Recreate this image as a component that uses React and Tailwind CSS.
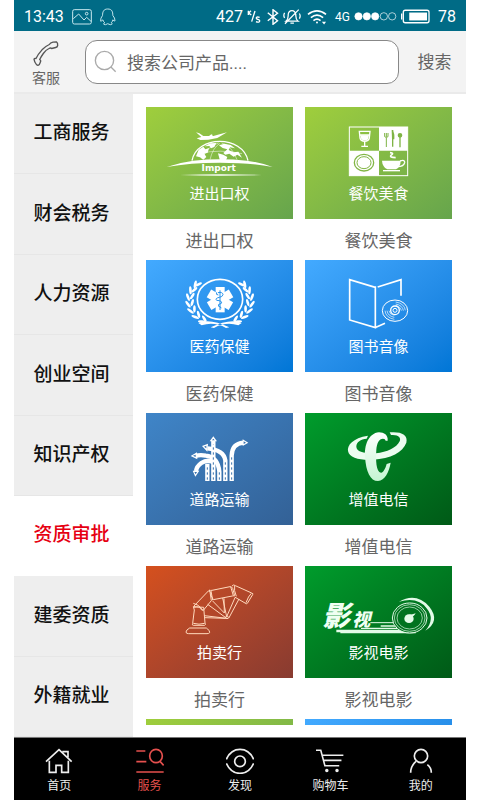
import { useState } from 'react';

const categories = ['工商服务', '财会税务', '人力资源', '创业空间', '知识产权', '资质审批', '建委资质', '外籍就业'];

const leafAngles = [34, 50, 66, 82, 98, 114, 130];

function ImportArt() {
    return (
        <svg viewBox="18 20 441 228" className="w-full" fill="#fff" aria-hidden="true">
            <path d="M168 96 L178 99 L190 107 L220 107 L261 96 L232 113 L205 118 L181 119 L170 114 L184 110Z" />
            <path d="M204 109 L214 102 L218 104 L216 110Z" />
            <path d="M156 181 C170 104 308 104 324 181" fill="none" stroke="#fff" strokeWidth="4" />
            <path d="M168 168 L176 148 L190 139 L196 147 L207 143 L203 157 L193 160 L199 170 L190 178 L180 171Z" />
            <path d="M194 138 L211 129 L229 128 L223 140 L213 144 L208 137Z" />
            <path d="M237 135 L253 130 L272 134 L285 144 L270 141 L266 149 L280 156 L295 154 L306 172 L292 163 L281 169 L268 160 L256 163 L250 158 L262 147 L248 143Z" />
            <path d="M234 159 L250 163 L262 170 L257 182 L240 181Z" />
            <path d="M186 176 Q204 135 236 128 M210 178 Q218 142 240 129 M291 178 Q277 138 245 128 M176 160 Q240 145 306 160" fill="none" stroke="#fff" strokeWidth="1.5" />
            <path d="M80 200 Q120 186 160 181 Q240 173 320 181 Q360 186 398 200 Q330 187 240 187 Q150 187 80 200Z" />
            <text x="236" y="211" textAnchor="middle" fontFamily="DejaVu Sans, sans-serif" fontSize="27" fontWeight="700">Import</text>
            <path d="M120 224 Q240 220 365 224 Q240 228 120 224Z" />
        </svg>
    );
}

function FoodArt() {
    return (
        <svg viewBox="18 20 441 228" className="w-full" fill="none" stroke="#fff" aria-hidden="true">
            <rect x="151" y="80" width="175" height="146" strokeWidth="3" />
            <path d="M240 80h86v71h-86zM151 151h89v75h-89z" fill="#fff" stroke="none" />
            <path d="M181 93h32l-2 20c-3 13-25 13-28 0zM183 104h28M197 124v13M187 138h20" strokeWidth="4" />
            <path d="M184 105h26l-3 12q-10 7-20 0z" fill="#fff" stroke="none" />
            <g stroke="#7fb445" strokeWidth="4">
                <path d="M257 98v11q5 5 10 0v-11M262 98v12M262 112v28" strokeWidth="3" />
                <path d="M281 89v50" />
                <path d="M278 88q10 8 8 29h-7z" fill="#7fb445" stroke="none" />
                <circle cx="303" cy="105" r="5" fill="#7fb445" />
                <path d="M303 108v33" />
            </g>
            <g stroke="#82b645">
                <ellipse cx="195" cy="187" rx="29" ry="25" strokeWidth="4" />
                <ellipse cx="195" cy="187" rx="21" ry="18" strokeWidth="3" />
            </g>
            <path d="M249 181h56q0 18-14 26h-26q-15-8-16-26z" fill="#fff" stroke="none" />
            <path d="M303 182q15-5 14 5q-3 12-21 12" strokeWidth="4" />
            <path d="M252 211h51" strokeWidth="4" />
            <path d="M273 157q14 1 3 8q-5 7 14 7" strokeWidth="5" />
        </svg>
    );
}

function MedicalArt() {
    return (
        <svg viewBox="18 14 441 228" className="w-full" fill="#fff" aria-hidden="true">
            <ellipse cx="240" cy="132" rx="68" ry="60" fill="none" stroke="#fff" strokeWidth="5" />
            {[0, 60, 120].map((deg) => (
                <rect key={deg} x="227" y="95" width="27" height="76" transform={`rotate(${deg} 240 133)`} />
            ))}
            <path d="M240 105v59" stroke="#2391ec" strokeWidth="3" />
            <path d="M234 112q14-3 15 6q-2 7-11 8q-14 3-8 9q18 1 14 9q-13 3-8 9q8 1 7 6M230 111q-3 8 5 8" fill="none" stroke="#2391ec" strokeWidth="3" />
            {leafAngles.map((a) => {
                const r = (a * Math.PI) / 180;
                const dx = Math.sin(r);
                const dy = Math.cos(r);
                return (
                    <g key={a}>
                        <ellipse cx={240 - 97 * dx} cy={136 + 76 * dy} rx="4" ry="12" transform={`rotate(${a - 118} ${240 - 97 * dx} ${136 + 76 * dy})`} />
                        <ellipse cx={240 + 97 * dx} cy={136 + 76 * dy} rx="4" ry="12" transform={`rotate(${118 - a} ${240 + 97 * dx} ${136 + 76 * dy})`} />
                        <ellipse cx={240 - 84 * dx} cy={132 + 70 * dy} rx="4" ry="11" transform={`rotate(${a - 66} ${240 - 84 * dx} ${132 + 70 * dy})`} />
                        <ellipse cx={240 + 84 * dx} cy={132 + 70 * dy} rx="4" ry="11" transform={`rotate(${66 - a} ${240 + 84 * dx} ${132 + 70 * dy})`} />
                    </g>
                );
            })}
            <path d="M175 203 Q210 188 268 216 L258 218 Q222 198 185 210ZM305 203 Q270 188 212 216 L222 218 Q258 198 295 210Z" />
        </svg>
    );
}

function BookArt() {
    return (
        <svg viewBox="18 14 441 228" className="w-full" fill="none" stroke="#fff" aria-hidden="true">
            <path d="M229 96 L152 73 V194 L229 217 V93M236 95 L306 73 V121M231 216 L258 204" strokeWidth="5" />
            <ellipse cx="288" cy="166" rx="38" ry="32" strokeWidth="3" />
            <circle cx="288" cy="165" r="13" strokeWidth="4" />
            <circle cx="288" cy="165" r="6" strokeWidth="3" />
            <path d="M258 166q2 21 28 26M264 166q2 16 22 20M270 166q2 12 16 14M290 140q26 4 29 25M290 146q21 4 23 20M290 151q15 3 17 15" strokeWidth="2" />
        </svg>
    );
}

function RoadArt() {
    const roads = [
        'M202 218V166',
        'M220 218V98',
        'M238 218V190Q234 146 197 142Q181 138 166 143',
        'M224 164Q204 150 184 164Q170 174 168 188',
        'M256 218V156Q251 124 202 120',
        'M275 218V142Q276 106 310 103',
    ];
    return (
        <svg viewBox="18 14 441 228" className="w-full" fill="none" aria-hidden="true">
            {roads.map((d) => <path key={d} d={d} stroke="#fff" strokeWidth="13" />)}
            {/* lane markings, only on the straight parts */}
            <path d="M202 214V170M220 214V108M238 214V190M256 214V154M275 214V140" stroke="#3972ae" strokeWidth="3" strokeDasharray="7 8" />
            <path d="M220 84l11 15h-22zM186 113l18-7l-2 24zM152 143l19-11l1 21zM166 205l-8-18h20zM325 103l-17-10v20z" fill="#fff" />
            <path d="M220 91l4 5h-8zM192 115l7-3v8zM159 142l8-3v7zM167 198l-4-7h8zM318 103l-7-4v8z" fill="#3972ae" />
        </svg>
    );
}

function TelecomArt() {
    return (
        <svg viewBox="18 14 441 228" className="w-full" aria-hidden="true">
            <defs>
                <linearGradient id="telecom" x1="0" y1="0" x2="0" y2="1">
                    <stop offset="0" stopColor="#fff" />
                    <stop offset="1" stopColor="#c4f5d2" />
                </linearGradient>
            </defs>
            <path fill="#ecfcf0" d="M207 82 C161 89 144 111 147 128 C151 149 182 156 222 154 C275 151 312 131 322 103 C328 78 305 69 272 72 L276 80 C299 78 307 88 302 99 C293 118 264 132 231 135 C196 136 172 130 172 115 C172 101 185 92 203 91Z" />
            <path fill="url(#telecom)" d="M266 97 C268 80 255 72 240 72 C208 75 196 111 198 145 C201 190 214 218 237 218 C258 216 270 191 275 163 L263 167 C258 184 252 194 246 193 C231 190 230 154 232 124 C234 104 240 91 252 91 Q259 91 260 97Z" />
        </svg>
    );
}

function AuctionArt() {
    return (
        <svg viewBox="18 16 441 228" className="w-full" fill="none" stroke="#ffd9bd" strokeWidth="3" strokeLinejoin="round" aria-hidden="true">
            <path d="M149 202h50q12 8 10 14q-2 3-8 3h-55q-8 0-8-5q0-6 11-12z" />
            <path d="M158 188q-3 6 2 6h34q4-1 1-7l-4-47l-31-2l3 10zM160 188q17 5 34 0" />
            <path d="M162 136l43-45q4-3 5 3l4 26l-24 29l-5-1q-6-13-22-8zM160 128q16 2 29 21" />
            <path d="M208 88q3 2 8 1l54-11q6 0 8 5l6 22l-7 1l-57 11q-9-12-8-22q-4-2-4-7zM272 78l8 27M213 91l5 27" />
            <path d="M276 76q5-6 10-1l49 22q6 2 3 5l-16 26q-2 3-7-1l-31-18M284 75q-3 14 5 32M334 98q-9 8-16 28" />
            <path d="M193 165l67 8l-57-42M195 171l62 2M217 120l36 37l-1-44M248 112l12 56l25-57M266 173l31-58" />
            <circle cx="261" cy="170" r="4" />
        </svg>
    );
}

function FilmArt() {
    return (
        <svg viewBox="18 16 441 228" className="w-full" fill="none" stroke="#e3fbe8" aria-hidden="true">
            <g fill="#effff2" stroke="none" fontFamily="Noto Sans CJK SC, sans-serif" fontWeight="900" fontStyle="italic">
                <text x="70" y="196" fontSize="84">影</text>
                <text x="160" y="196" fontSize="54">视</text>
            </g>
            <path d="M112 211H330" strokeWidth="7" />
            <path d="M124 216H350M186 203H306M245 196H290" strokeWidth="4" />
            <path d="M214 186H282" strokeWidth="3" />
            <ellipse cx="332" cy="172" rx="52" ry="45" fill="#00731f" strokeWidth="3" />
            <ellipse cx="332" cy="172" rx="46" ry="40" strokeWidth="2" />
            <ellipse cx="332" cy="172" rx="38" ry="33" strokeWidth="2" />
            <ellipse cx="330" cy="174" rx="14" ry="13" fill="#e3fbe8" stroke="none" />
            <path d="M330 162q10 0 20-4q-3 7-12 13z" fill="#e3fbe8" stroke="none" />
            <path d="M300 123q52-29 91 15q34 43-12 72q30-35 5-66q-27-37-84-21z" fill="#e3fbe8" stroke="none" />
        </svg>
    );
}

const services = [
    { name: '进出口权', Art: ImportArt, bg: 'from-[#9fce3c] to-[#66a54c]' },
    { name: '餐饮美食', Art: FoodArt, bg: 'from-[#9fce3c] to-[#66a54c]' },
    { name: '医药保健', Art: MedicalArt, bg: 'from-[#43aaff] to-[#0076d6]' },
    { name: '图书音像', Art: BookArt, bg: 'from-[#43aaff] to-[#0076d6]' },
    { name: '道路运输', Art: RoadArt, bg: 'from-[#3f85c8] to-[#336196]' },
    { name: '增值电信', Art: TelecomArt, bg: 'from-[#009c2c] to-[#005a17]' },
    { name: '拍卖行', Art: AuctionArt, bg: 'from-[#d5501d] to-[#883b30]' },
    { name: '影视电影', Art: FilmArt, bg: 'from-[#009c2c] to-[#005a17]' },
];

const tabs = [
    {
        name: '首页',
        viewBox: '137 84 84 78',
        icon: <path d="M140 125L179 89L217 125M150 122V157H170V136H187V157H207V122M189 95H206V112" />,
    },
    {
        name: '服务',
        viewBox: '407 84 84 78',
        icon: (
            <>
                <path d="M408 93H435M408 125H438M408 156H490M479 124L490 136" />
                <ellipse cx="467" cy="108" rx="19" ry="20" />
            </>
        ),
    },
    {
        name: '发现',
        viewBox: '678 84 84 78',
        icon: (
            <>
                <path d="M679 118Q692 88 720 88Q748 88 761 118M679 130Q692 160 720 160Q748 160 761 130" />
                <circle cx="720" cy="124" r="16" />
            </>
        ),
    },
    {
        name: '购物车',
        viewBox: '949 84 88 78',
        icon: (
            <>
                <path d="M948 89H964L977 138H1022M969 105H1035M974 121H1029" />
                <circle cx="983" cy="153" r="3" fill="currentColor" />
                <circle cx="1015" cy="153" r="3" fill="currentColor" />
            </>
        ),
    },
    {
        name: '我的',
        viewBox: '1220 84 84 78',
        icon: (
            <>
                <circle cx="1262" cy="108" r="20" />
                <path d="M1247 124Q1231 138 1231 158M1281 134Q1293 143 1293 158" />
            </>
        ),
    },
];

function StatusBar() {
    return (
        <div className="h-[31px] shrink-0 flex items-center justify-between px-2.5 pt-0.5 bg-[#006b86] text-white text-base leading-5">
            <div className="flex items-center gap-2">
                <span>13:43</span>
                <svg viewBox="220 24 60 48" className="w-5 h-4" fill="none" stroke="#c9e9ef" strokeWidth="3">
                    <rect x="222" y="26" width="56" height="43" rx="5" />
                    <path d="M224 53L240 39L256 57L264 49L277 61" />
                    <circle cx="264" cy="38" r="4" />
                </svg>
                <svg viewBox="298 21 50 54" className="w-4 h-[18px]" fill="none" stroke="#c9e9ef" strokeWidth="3">
                    <path d="M322 23C309 23 306 32 306 43Q299 52 300 61Q303 61 307 57Q309 64 313 66Q304 71 315 72L322 69L330 72Q341 71 333 66Q338 62 338 57Q343 62 345 60Q345 51 338 43C338 32 336 23 322 23Z" />
                </svg>
            </div>
            <div className="flex items-center gap-1">
                <span>427</span>
                <svg viewBox="0 0 42 48" className="w-3.5 h-4" fill="none" stroke="#fff" strokeWidth="4">
                    <path d="M4 5V18M12 5L5 12L13 18M24 6L14 38M38 25Q27 22 28 28Q29 31 35 32Q40 35 37 38Q33 41 27 38" />
                </svg>
                <svg viewBox="83 24 34 46" className="w-3 h-4 ml-0.5" fill="none" stroke="#fff" strokeWidth="4">
                    <path d="M85 35L113 58L100 68V26L113 36L85 58" />
                </svg>
                <svg viewBox="128 22 56 50" className="w-[18px] h-4" fill="none" stroke="#fff" strokeWidth="4">
                    <path d="M137 60H175Q167 54 168 40Q166 27 156 27Q145 27 144 40Q145 54 137 60ZM151 66H162M177 24L134 68M133 34Q128 42 133 50M179 36Q184 44 179 52" />
                </svg>
                <svg viewBox="202 22 62 48" className="w-5 h-4 ml-0.5 mr-1" fill="none" stroke="#fff" strokeWidth="5">
                    <path d="M205 38Q233 16 261 38M214 48Q233 32 252 48M222 57Q233 48 244 57" />
                    <circle cx="233" cy="63" r="3" fill="#fff" stroke="none" />
                    <path d="M248 61h13l-6 8z" fill="#fff" stroke="none" />
                </svg>
                <span className="text-xs">4G</span>
                <svg viewBox="348 34 128 27" className="w-[43px] h-[9px]" fill="#fff" stroke="#fff" strokeWidth="2">
                    <circle cx="361" cy="47" r="11" />
                    <circle cx="386" cy="47" r="11" />
                    <circle cx="411" cy="47" r="11" />
                    <circle cx="437" cy="47" r="11" fill="none" />
                    <circle cx="462" cy="47" r="11" fill="none" />
                </svg>
                <svg viewBox="486 25 88 44" className="w-[29px] h-[15px]" fill="none" stroke="#fff" strokeWidth="4">
                    <rect x="493" y="28" width="78" height="38" rx="6" />
                    <path d="M488 38V56" />
                    <rect x="511" y="35" width="54" height="24" fill="#fff" stroke="none" />
                </svg>
                <span className="ml-1">78</span>
            </div>
        </div>
    );
}

function SearchHeader() {
    return (
        <header className="h-[63px] shrink-0 flex items-center bg-[#f3f3f3] border-b-2 border-[#eaeaea] text-[#666]">
            <button className="w-16 pt-1 flex flex-col items-center gap-0.5 text-[14px] leading-[18px] cursor-pointer">
                <svg viewBox="100 124 78 80" className="w-[26px] h-[27px]" fill="none" stroke="#555" strokeWidth="4" strokeLinejoin="round">
                    <path d="M103 181Q104 178 109 179Q115 166 127 153Q139 141 149 137Q152 132 160 130L170 129Q175 133 174 140Q173 145 168 146L156 149Q153 146 148 149Q139 153 131 164Q124 174 120 182Q125 185 122 190L119 197Q115 201 111 198Q104 190 103 181Z" />
                </svg>
                <span>客服</span>
            </button>
            <form className="flex-1 h-11 ml-[7px] flex items-center border border-[#888] rounded-xl bg-white" onSubmit={(e) => e.preventDefault()}>
                <label htmlFor="keyword" className="pl-2 pr-2.5" aria-label="搜索公司产品">
                    <svg viewBox="282 153 68 68" className="w-[23px] h-[23px]" fill="none" stroke="#aaa" strokeWidth="4">
                        <circle cx="313" cy="184" r="27" />
                        <path d="M332 203L346 217" />
                    </svg>
                </label>
                <input id="keyword" type="text" placeholder="搜索公司产品...."
                    className="flex-1 min-w-0 pt-0.5 text-[17px] leading-6 bg-transparent outline-none placeholder:text-[#666]" />
            </form>
            <button className="w-[67px] pt-0.5 pr-1.5 pl-2.5 text-[17px] whitespace-nowrap cursor-pointer">搜索</button>
        </header>
    );
}

export default function App() {
    const [category, setCategory] = useState('资质审批');
    const [tab, setTab] = useState('服务');

    return (
        <div className="h-screen px-3.5 bg-white font-[Roboto,'Noto_Sans_CJK_SC',sans-serif]">
            <div className="h-full flex flex-col">
                <StatusBar />
                <SearchHeader />

                <div className="flex-1 min-h-0 flex">
                    {/* Category list */}
                    <nav className="w-[119px] shrink-0 grid auto-rows-fr bg-[#eee]">
                        {categories.map((name) => (
                            <button key={name} onClick={() => setCategory(name)}
                                className={`pr-1 border-b text-[19px] font-medium cursor-pointer ${name === category ? 'bg-white border-white text-[#e60012]' : 'border-[#e6e6e6] text-[#111]'}`}>
                                {name}
                            </button>
                        ))}
                    </nav>

                    {/* Services */}
                    <main className="flex-1 min-w-0 pt-[13px] pb-3 pl-[13px] pr-3.5">
                        <div className="h-full overflow-hidden grid grid-cols-2 gap-x-3 content-start">
                            {services.map(({ name, Art, bg }) => (
                                <a key={name} href="#" className="block text-center">
                                    <div className={`h-28 bg-linear-to-br ${bg}`}>
                                        <Art />
                                        <p className="text-[15px] leading-[22px] text-white">{name}</p>
                                    </div>
                                    <p className="h-[41px] pt-2.5 text-[17px] leading-6 text-[#666]">{name}</p>
                                </a>
                            ))}
                            <div className="h-28 bg-linear-to-br from-[#9fce3c] to-[#66a54c]" />
                            <div className="h-28 bg-linear-to-br from-[#43aaff] to-[#0076d6]" />
                        </div>
                    </main>
                </div>

                {/* Bottom tabs */}
                <nav className="h-[63px] shrink-0 grid grid-cols-5 bg-black border-t border-[#777]">
                    {tabs.map(({ name, viewBox, icon }) => (
                        <button key={name} onClick={() => setTab(name)}
                            className={`pt-2.5 flex flex-col items-center gap-1 text-xs leading-4 cursor-pointer ${name === tab ? 'text-[#e5504e]' : 'text-[#eee]'}`}>
                            <svg viewBox={viewBox} className="w-7 h-[26px]" fill="none" stroke="currentColor" strokeWidth="5">
                                {icon}
                            </svg>
                            <span>{name}</span>
                        </button>
                    ))}
                </nav>
            </div>
        </div>
    );
}
